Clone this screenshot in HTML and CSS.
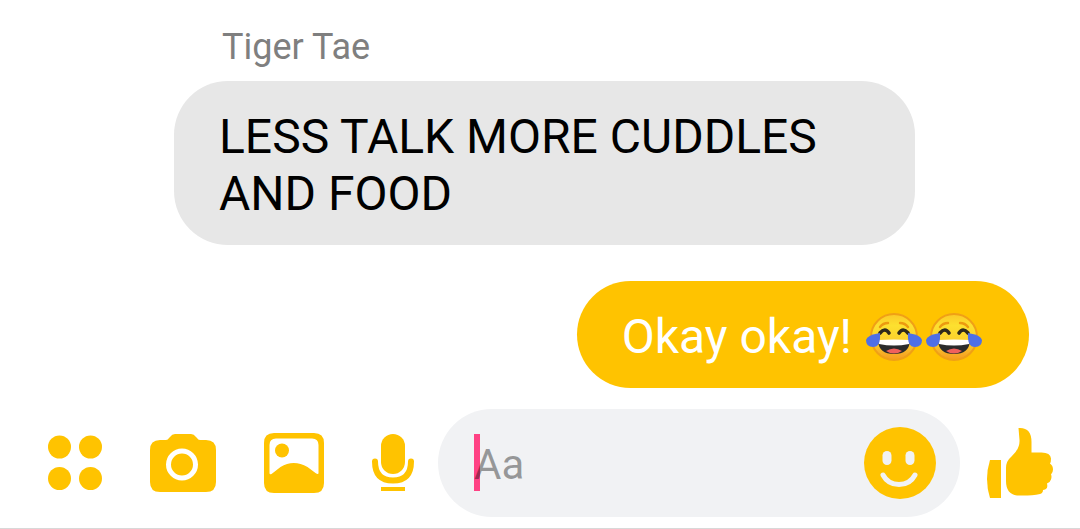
FILE: index.html
```html
<!DOCTYPE html>
<html lang="en">
<head>
<meta charset="utf-8">
<meta name="viewport" content="width=device-width, initial-scale=1">
<title>Chat</title>
<link rel="stylesheet" href="styles.css">
</head>
<body>
<svg class="defs" aria-hidden="true">
  <defs>
    <linearGradient id="face" x1="0" y1="0" x2="0" y2="1">
      <stop offset="0" stop-color="#fbc928"/>
      <stop offset="0.25" stop-color="#fde02f"/>
      <stop offset="0.6" stop-color="#fcd02c"/>
      <stop offset="1" stop-color="#f59a22"/>
    </linearGradient>
    <symbol id="joy" viewBox="0 0 60 50">
      <circle cx="30" cy="25" r="23" fill="url(#face)" stroke="#f0a016" stroke-width="2"/>
      <path d="M16 15q3-4 8-4M44 15q-3-4-8-4" fill="none" stroke="#ec9a10" stroke-width="2.400" stroke-linecap="round"/>
      <path d="M16 21q5-6 9 0M35 21q4-6 9 0" fill="none" stroke="#2f2a1c" stroke-width="3.600" stroke-linecap="round"/>
      <path d="M14 29q16 2 32 0q-1 13-16 13t-16-13z" fill="#2b2b2b"/>
      <path d="M14 28q16-1 32 0l-1 4q-15 3-30 0z" fill="#fff"/>
      <path d="M22 39q8-5 16 0q-8 5-16 0z" fill="#f0605c"/>
      <path d="M16 21q1 14-7 14q-7 0-7-7q1-5 14-7z" fill="#4f6fe6"/>
      <path d="M44 21q-1 14 7 14q7 0 7-7q-1-5-14-7z" fill="#4f6fe6"/>
    </symbol>
  </defs>
</svg>
<main class="chat">
  <section class="messages">
    <div class="incoming">
      <div class="sender">Tiger Tae</div>
      <p class="bubble bubble-in">LESS TALK MORE CUDDLES AND FOOD</p>
    </div>
    <p class="bubble bubble-out">
      <span>Okay okay!</span>
      <span class="emojis" role="img" aria-label="Face with tears of joy, twice"><svg class="emoji"><use href="#joy"/></svg><svg class="emoji"><use href="#joy"/></svg></span>
    </p>
  </section>
  <form class="composer">
    <button class="tool" type="button" aria-label="More">
      <svg width="54" height="56" viewBox="0 0 54 56"><circle cx="11.5" cy="12" r="11.5"/><circle cx="42.5" cy="12" r="11.5"/><circle cx="11.5" cy="43.500" r="11.5"/><circle cx="42.500" cy="43.500" r="11.500"/></svg>
    </button>
    <button class="tool" type="button" aria-label="Camera">
      <svg width="66" height="58" viewBox="0 0 66 58"><path d="M10 6h6q2 0 3-2l1-1q2-3 5-3h16q3 0 5 3l1 1q1 2 3 2h6q10 0 10 10v32q0 10-10 10H10Q0 58 0 48V16Q0 6 10 6z"/><circle class="hole-line" cx="32" cy="30.500" r="13.500"/></svg>
    </button>
    <button class="tool" type="button" aria-label="Gallery">
      <svg width="60" height="60" viewBox="0 0 60 60"><path fill-rule="evenodd" d="M10 0h40q10 0 10 10v40q0 10-10 10H10Q0 60 0 50V10Q0 0 10 0zM12 5.500q-6.500 0-6.500 6.500v28q0 2 2 1q4-3 9-7q13-8 27 0l8 6q3 2 3 0V12q0-6.500-6.500-6.500z"/><circle cx="18" cy="17.500" r="7"/></svg>
    </button>
    <button class="tool" type="button" aria-label="Voice message">
      <svg width="42" height="58" viewBox="0 0 42 58"><rect x="9" y="0" width="24" height="40" rx="12"/><path class="mic-arc" d="M3 27.500q0 19 18 19t18-19"/><path d="M9 53h24v4H9z"/></svg>
    </button>
    <div class="field">
      <span class="caret"></span>
      <input class="text" type="text" placeholder="Aa" aria-label="Message">
      <button class="tool" type="button" aria-label="Emoji">
        <svg width="72" height="72" viewBox="0 0 72 72"><circle cx="36" cy="36" r="36"/><g class="smile-eyes"><rect x="18.500" y="24" width="9" height="14" rx="4.500"/><rect x="41.500" y="24" width="9" height="14" rx="4.500"/></g><path class="smile-mouth" d="M19 48q5 9.500 16 9.500T51 48"/></svg>
      </button>
    </div>
    <button class="tool" type="button" aria-label="Send a like">
      <svg width="66" height="72" viewBox="0 0 66 72"><path d="M3 33h11v38H3Q-3 52 3 33z"/><path d="M31.500 1q13-1 13 14v10.500h10q9 0 9.500 6q0 4-1 5q3 2 3 6q0 3-2 5q1 2 0 5t-4 4q1 4-1 5.500q-2 1-3 1q0 3-3 4q-9 2-23 1.500Q19 67 19 54V41q0-7 5.500-11.500Q33 22 32.500 13z"/></svg>
    </button>
  </form>
</main>
</body>
</html>
```
FILE: styles.css
```css
* {
  box-sizing: border-box;
}

body {
  margin: 0;
  background: #fff;
  font-family: Roboto, "Liberation Sans", sans-serif;
}

.defs {
  position: absolute;
  width: 0;
  height: 0;
}

.chat {
  border-bottom: 1px solid #d8d8d8;
}

.messages {
  display: flex;
  flex-direction: column;
  gap: 36px;
  padding: 26px 51px 21px 174px;
}

.incoming {
  margin-right: 114px;
}

.sender {
  margin-bottom: 13px;
  padding-left: 48px;
  color: #7f7f7f;
  font-size: 36px;
  line-height: 42px;
}

.bubble {
  margin: 0;
  padding: 27px 45px 23px;
  border-radius: 54px;
  font-size: 48px;
  line-height: 57px;
}

.bubble-in {
  background: #e7e7e7;
  color: #000;
}

.bubble-out {
  display: flex;
  align-items: center;
  align-self: flex-end;
  gap: 12px;
  background: #ffc300;
  color: #fff;
}

.emojis {
  display: flex;
}

.emoji {
  width: 60px;
  height: 50px;
}

.composer {
  display: flex;
  align-items: center;
  padding: 0 27px 11px 48px;
}

.tool {
  display: flex;
  flex: none;
  padding: 0;
  border: 0;
  background: none;
  fill: #ffc300;
}

.composer > .tool + .tool {
  margin-left: 48px;
}

.hole-line {
  fill: none;
  stroke: #fff;
  stroke-width: 5;
}

.mic-arc {
  fill: none;
  stroke: #ffc300;
  stroke-width: 6;
  stroke-linecap: round;
}

.smile-eyes {
  fill: #f1f2f4;
}

.smile-mouth {
  fill: none;
  stroke: #f1f2f4;
  stroke-width: 5;
  stroke-linecap: round;
}

.field {
  position: relative;
  display: flex;
  flex: 1;
  align-items: center;
  min-width: 0;
  height: 108px;
  margin: 0 27px 0 24px;
  padding: 0 24px 0 36px;
  border-radius: 54px;
  background: #f1f2f4;
}

.caret {
  position: absolute;
  top: 25px;
  left: 36px;
  width: 6px;
  height: 57px;
  background: #ff4284;
}

.text {
  position: relative;
  flex: 1;
  min-width: 0;
  padding: 4px 0 0;
  border: 0;
  outline: 0;
  background: transparent;
  color: #000;
  font: 42px/50px Roboto, "Liberation Sans", sans-serif;
}

.text::placeholder {
  color: rgba(0, 0, 0, 0.38);
  opacity: 1;
}
```
